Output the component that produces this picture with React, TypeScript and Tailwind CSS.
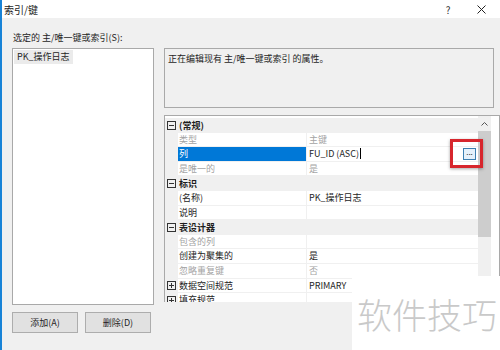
import React from "react";

const FONT = { fontFamily: '"Noto Sans CJK SC", "Noto Sans", sans-serif' };

type Row =
  | { kind: "cat"; label: string; open: boolean; value?: string }
  | { kind: "item"; label: string; value?: string; dim?: boolean; dimValue?: boolean; selected?: boolean };

const rows: Row[] = [
  { kind: "cat", label: "(常规)", open: true },
  { kind: "item", label: "类型", value: "主键", dim: true, dimValue: true },
  { kind: "item", label: "列", value: "FU_ID (ASC)", selected: true },
  { kind: "item", label: "是唯一的", value: "是", dim: true, dimValue: true },
  { kind: "cat", label: "标识", open: true },
  { kind: "item", label: "(名称)", value: "PK_操作日志" },
  { kind: "item", label: "说明" },
  { kind: "cat", label: "表设计器", open: true },
  { kind: "item", label: "包含的列", dim: true },
  { kind: "item", label: "创建为聚集的", value: "是" },
  { kind: "item", label: "忽略重复键", value: "否", dim: true, dimValue: true },
  { kind: "cat", label: "数据空间规范", open: false, value: "PRIMARY" },
  { kind: "cat", label: "填充规范", open: false },
];

function Box({ open }: { open: boolean }) {
  return (
    <svg width="9" height="9" viewBox="0 0 9 9" className="shrink-0">
      <rect x="0.5" y="0.5" width="8" height="8" fill="none" stroke="#333" />
      <path d="M2 4.5h5" stroke="#333" />
      {!open && <path d="M4.5 2v5" stroke="#333" />}
    </svg>
  );
}

function GridRow({ row }: { row: Row }) {
  if (row.kind === "cat") {
    const isSub = row.value !== undefined || !row.open;
    return (
      <div className={`flex h-[14.6px] shrink-0 items-center ${isSub ? "bg-white" : "bg-[#f0f0f0]"}`}>
        <div className="flex w-[13px] shrink-0 items-center justify-center self-stretch bg-[#f0f0f0]">
          <Box open={row.open} />
        </div>
        <div
          className={`flex w-[129px] shrink-0 items-center self-stretch pl-[1px] text-[#1e1e1e] ${
            isSub ? "border-r border-b border-[#f0f0f0]" : "font-bold"
          }`}
        >
          {row.label}
        </div>
        <div className={`flex flex-1 items-center self-stretch pl-[2px] ${isSub ? "border-b border-[#f0f0f0]" : ""}`}>
          {row.value}
        </div>
      </div>
    );
  }
  return (
    <div className="flex h-[14.6px] shrink-0 items-stretch bg-white">
      <div className="w-[13px] shrink-0 bg-[#f0f0f0]" />
      <div
        className={`flex w-[129px] shrink-0 items-center border-r border-b border-[#f0f0f0] pl-[1px] ${
          row.selected ? "bg-[#0078d7] text-white" : row.dim ? "text-[#a3a3a3]" : "text-[#1e1e1e]"
        }`}
      >
        {row.label}
      </div>
      <div
        className={`flex flex-1 items-center border-b border-[#f0f0f0] pl-[2px] ${
          row.dimValue ? "text-[#a3a3a3]" : "text-[#1e1e1e]"
        }`}
      >
        {row.value}
        {row.selected && <span className="ml-[1px] h-[11px] w-[1px] bg-black" />}
        {row.selected && (
          <span className="ml-auto mr-[2px] flex h-[12px] w-[13px] items-start justify-center border border-[#3c7fb1] bg-[#e5f1fb] text-[8px] leading-[6px] text-[#1e1e1e]">
            ...
          </span>
        )}
      </div>
    </div>
  );
}

export default function App() {
  return (
    <div
      className="relative flex h-[350px] w-[500px] flex-col overflow-hidden border-l-2 border-[#1883d7] bg-[#f0f0f0] text-[9px] text-[#1e1e1e]"
      style={FONT}
    >
      {/* title bar */}
      <div className="flex h-[18px] shrink-0 items-center bg-white pl-[2px] text-[10px]">
        <span>索引/键</span>
        <span className="ml-auto w-[10px] text-center text-[10px] text-[#333]">?</span>
        <svg width="9" height="9" viewBox="0 0 9 9" className="ml-[24px] mr-[14px]">
          <path d="M0.5 0.5l8 8M8.5 0.5l-8 8" stroke="#222" strokeWidth="1" />
        </svg>
      </div>

      <div className="flex flex-1 gap-[10px] pl-[10px]">
        {/* left */}
        <div className="flex w-[142px] shrink-0 flex-col">
          <div className="flex h-[30px] items-end pb-[4px] pl-[1px]">选定的 主/唯一键或索引(S):</div>
          <div className="h-[257px] border border-[#a9a9a9] bg-white p-[1px]">
            <div className="flex h-[14px] w-fit items-center bg-[#ebebeb] px-[3px]">PK_操作日志</div>
          </div>
          <div className="mt-[7px] flex gap-[7px]">
            <div className="flex h-[21px] w-[66px] items-center justify-center border border-[#adadad] bg-[#e1e1e1]">
              添加(A)
            </div>
            <div className="flex h-[21px] w-[66px] items-center justify-center border border-[#adadad] bg-[#e1e1e1]">
              删除(D)
            </div>
          </div>
        </div>

        {/* right */}
        <div className="flex flex-1 flex-col pt-[30px]">
          <div className="mr-[6px] h-[60px] border border-[#a9a9a9] px-[3px] pt-[3px]">
            正在编辑现有 主/唯一键或索引 的属性。
          </div>
          <div className="mt-[7px] flex h-[187px] overflow-hidden border border-b-0 border-[#a9a9a9] bg-white">
            <div className="flex flex-1 flex-col overflow-hidden pt-[2px]">
              {rows.map((r, i) => (
                <GridRow key={i} row={r} />
              ))}
            </div>
            <div className="flex w-[13px] shrink-0 flex-col bg-[#f0f0f0]">
              <div className="flex h-[15px] items-center justify-center">
                <svg width="7" height="5" viewBox="0 0 7 5">
                  <path d="M0.5 4.5l3-3 3 3" fill="none" stroke="#555" />
                </svg>
              </div>
              <div className="h-[106px] bg-[#cdcdcd]" />
            </div>
            <div className="w-[8px] shrink-0 bg-white" />
          </div>
        </div>
      </div>

      {/* red highlight */}
      <div className="absolute left-[448px] top-[139px] h-[29px] w-[33px] border-[3px] border-[#d7262d] shadow-[0_1px_3px_rgba(0,0,0,0.35)]" />

      {/* watermark */}
      <div className="absolute left-[350px] top-[276px] flex h-[74px] w-[150px] items-center justify-center bg-white">
        <span className="text-[35px] font-light leading-none text-[#c9c9c9]">软件技巧</span>
      </div>
    </div>
  );
}
